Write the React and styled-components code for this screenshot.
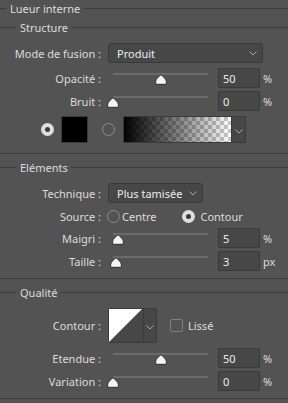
import React from "react";
import styled, { createGlobalStyle } from "styled-components";

const Global = createGlobalStyle`
  html, body {
    margin: 0;
    padding: 0;
    background: #535353;
  }
  body {
    font-family: "Noto Sans", "Liberation Sans", sans-serif;
    font-size: 11px;
    color: #dcdcdc;
  }
`;

const Panel = styled.div`
  width: 288px;
  height: 403px;
  overflow: hidden;
  display: flex;
  flex-direction: column;
`;

const Legend = styled.div`
  display: flex;
  align-items: center;
  height: 16px;
  margin-top: ${(p) => p.$mt || 0}px;
  white-space: nowrap;
  &::before {
    content: "";
    width: ${(p) => p.$indent}px;
    height: 1px;
    background: #3d3d3d;
    margin-right: 4px;
  }
  &::after {
    content: "";
    flex: 1;
    height: 1px;
    background: #3d3d3d;
    margin-left: 3px;
  }
`;

const Rule = styled.div`
  height: 1px;
  background: #3d3d3d;
  margin-top: ${(p) => p.$mt}px;
`;

const Row = styled.div`
  display: flex;
  align-items: center;
  height: ${(p) => p.$h || 20}px;
  margin-top: ${(p) => p.$mt || 0}px;
`;

const Label = styled.div`
  width: 101px;
  text-align: right;
  margin-right: 7px;
  flex-shrink: 0;
  white-space: nowrap;
`;

const Select = styled.div`
  box-sizing: border-box;
  width: ${(p) => p.$w}px;
  height: 20px;
  background: #474747;
  border: 1px solid #3a3a3a;
  border-radius: 3px;
  display: flex;
  align-items: center;
  justify-content: space-between;
  padding: 0 5px 0 8px;
  color: #e8edf5;
`;

const Chevron = ({ color = "#a8a8a8" }) => (
  <svg width="8" height="5" viewBox="0 0 8 5">
    <path d="M0.5 0.5 L4 4 L7.5 0.5" fill="none" stroke={color} strokeWidth="1" />
  </svg>
);

const SliderBox = styled.div`
  position: relative;
  width: 95px;
  height: 20px;
  margin-left: 5px;
  margin-right: 10px;
  &::before {
    content: "";
    position: absolute;
    left: 0;
    right: 0;
    top: 5px;
    height: 2px;
    background: #6b6b6b;
  }
`;

const Thumb = styled.svg`
  position: absolute;
  top: 6px;
  margin-left: -6px;
`;

const Slider = ({ value }) => (
  <SliderBox>
    <Thumb width="12" height="11" viewBox="0 0 12 11" style={{ left: `${value * 95}px` }}>
      <path
        d="M6 0.7 C7.5 2.2 11.3 4.8 11.3 7.3 L11.3 10.3 L0.7 10.3 L0.7 7.3 C0.7 4.8 4.5 2.2 6 0.7 Z"
        fill="#f4f4f4"
        stroke="#2e2e2e"
        strokeWidth="1"
      />
    </Thumb>
  </SliderBox>
);

const Field = styled.div`
  box-sizing: border-box;
  width: 42px;
  height: 20px;
  background: #474747;
  border: 1px solid #3a3a3a;
  padding-left: 4px;
  display: flex;
  align-items: center;
  color: #e8edf5;
`;

const Unit = styled.span`
  margin-left: 3px;
`;

const Radio = styled.span`
  box-sizing: border-box;
  display: inline-block;
  width: 13px;
  height: 13px;
  border-radius: 50%;
  flex-shrink: 0;
  margin-left: ${(p) => p.$ml || 0}px;
  border: ${(p) => (p.$on ? "4px solid #dedede" : "1px solid #8c8c8c")};
  background: ${(p) => (p.$on ? "#3a3a3a" : "transparent")};
`;

const RadioText = styled.span`
  margin-left: ${(p) => p.$ml || 2}px;
`;

const Swatch = styled.div`
  box-sizing: border-box;
  width: 27px;
  height: 27px;
  background: #000;
  border: 1px solid #3a3a3a;
  margin-left: 7px;
`;

const GradientPicker = styled.div`
  box-sizing: border-box;
  display: flex;
  height: 27px;
  margin-left: 8px;
  border: 1px solid #3a3a3a;
`;

const GradientBar = styled.div`
  width: 107px;
  background-image: linear-gradient(to right, #000 0%, rgba(0, 0, 0, 0) 100%),
    repeating-conic-gradient(#c8c8c8 0 25%, #ffffff 0 50%);
  background-size: 100% 100%, 8px 8px;
`;

const DropPart = styled.div`
  width: ${(p) => p.$w}px;
  background: #474747;
  display: flex;
  align-items: center;
  justify-content: center;
  border-left: 1px solid #3a3a3a;
  padding-top: 3px;
`;

const ContourPicker = styled.div`
  box-sizing: border-box;
  display: flex;
  height: 35px;
  border: 1px solid #3a3a3a;
  border-radius: 2px;
`;

const Check = styled.span`
  box-sizing: border-box;
  width: 13px;
  height: 13px;
  border: 1px solid #7e7e7e;
  border-radius: 2px;
  margin-left: 13px;
  margin-right: 5px;
`;

const SliderRow = ({ label, value, text, unit = "%", mt }) => (
  <Row $mt={mt}>
    <Label>{label}</Label>
    <Slider value={value} />
    <Field>{text}</Field>
    <Unit>{unit}</Unit>
  </Row>
);

export default function App() {
  return (
    <>
      <Global />
      <Panel>
        <Legend $indent={6}>Lueur interne</Legend>
        <Legend $indent={16} $mt={3}>Structure</Legend>
        <Row $mt={8}>
          <Label>Mode de fusion :</Label>
          <Select $w={155}>
            Produit
            <Chevron />
          </Select>
        </Row>
        <SliderRow label="Opacité :" value={0.5} text="50" mt={5} />
        <SliderRow label="Bruit :" value={0} text="0" mt={3} />
        <Row $h={27} $mt={5}>
          <Radio $on $ml={41} />
          <Swatch />
          <Radio $ml={14} />
          <GradientPicker>
            <GradientBar />
            <DropPart $w={13}>
              <Chevron />
            </DropPart>
          </GradientPicker>
        </Row>
        <Rule $mt={10} />
        <Legend $indent={16} $mt={5}>Eléments</Legend>
        <Row $mt={8}>
          <Label>Technique :</Label>
          <Select $w={95}>
            Plus tamisée
            <Chevron />
          </Select>
        </Row>
        <Row $mt={3}>
          <Label>Source :</Label>
          <Radio $ml={-1} />
          <RadioText>Centre</RadioText>
          <Radio $ml={26} $on />
          <RadioText $ml={5}>Contour</RadioText>
        </Row>
        <SliderRow label="Maigri :" value={0.05} text="5" mt={2} />
        <SliderRow label="Taille :" value={0.03} text="3" unit="px" mt={3} />
        <Rule $mt={7} />
        <Legend $indent={16} $mt={5}>Qualité</Legend>
        <Row $h={35} $mt={8}>
          <Label>Contour :</Label>
          <ContourPicker>
            <svg width="34" height="33" viewBox="0 0 34 33">
              <rect width="34" height="33" fill="#474747" />
              <path d="M0 0 H33 L0 33 Z" fill="#ffffff" />
            </svg>
            <DropPart $w={12}>
              <Chevron />
            </DropPart>
          </ContourPicker>
          <Check />
          <span>Lissé</span>
        </Row>
        <SliderRow label="Etendue :" value={0.5} text="50" mt={5} />
        <SliderRow label="Variation :" value={0} text="0" mt={3} />
        <Rule $mt={7} />
      </Panel>
    </>
  );
}
